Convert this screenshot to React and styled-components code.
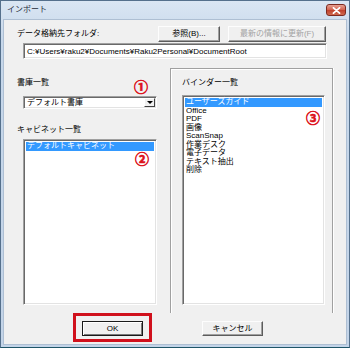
import React from 'react';
import styled, { createGlobalStyle } from 'styled-components';

const UI = `"Liberation Sans", "Noto Sans CJK JP", sans-serif`;

const Global = createGlobalStyle`
  html, body { margin: 0; padding: 0; background: #fff; }
  body { width: 350px; height: 348px; overflow: hidden; }
  *, *::before, *::after { box-sizing: border-box; }
`;

const Window = styled.div`
  width: 350px;
  height: 348px;
  display: flex;
  flex-direction: column;
  background: linear-gradient(#dae6f3, #c6d7ea 40px, #c3d4e8);
  border: 1px solid #55708c;
  border-bottom-color: #1f5568;
  font-family: ${UI};
  font-size: 8px;
  color: #000;
`;

const TitleBar = styled.div`
  height: 19px;
  flex: none;
  display: flex;
  align-items: flex-start;
  padding-left: 6px;
`;

const Title = styled.span`
  margin-top: 4px;
  font-size: 8px;
  line-height: 10px;
  color: #1e2a38;
`;

const Close = styled.div`
  margin-left: auto;
  margin-right: 3px;
  margin-top: 3px;
  width: 20px;
  height: 12px;
  border: 1px solid #7d2a20;
  border-radius: 3px;
  background: linear-gradient(#e6a193, #d2604c 50%, #c0402c 51%, #cf6a4f);
  display: flex;
  align-items: center;
  justify-content: center;
`;

const Client = styled.div`
  flex: 1;
  margin: 0 3px 3px;
  background: #f0f0f0;
  box-shadow: 0 0 0 1px #aebfd3;
  display: flex;
  flex-direction: column;
`;

const TopRow = styled.div`
  display: flex;
  align-items: center;
  gap: 8px;
  padding: 6px 20px 0 13px;
`;

const Label = styled.span`
  flex: ${(p) => (p.$grow ? 1 : 'none')};
  margin-top: ${(p) => p.$mt || 0}px;
  font-size: 8px;
  line-height: 10px;
  white-space: nowrap;
`;

const Button = styled.button`
  width: ${(p) => p.$w}px;
  height: ${(p) => p.$h || 16}px;
  padding: 0;
  margin: 0;
  font-family: ${UI};
  font-size: 8px;
  line-height: 10px;
  color: ${(p) => (p.disabled ? '#a3a3a3' : '#000')};
  background: #f0f0f0;
  border: 1px solid;
  border-color: ${(p) => (p.$default ? '#1a1a1a' : '#fdfdfd #5c5c5c #5c5c5c #fdfdfd')};
  box-shadow: ${(p) =>
    p.$default
      ? 'inset 1px 1px 0 #fff, inset -1px -1px 0 #7a7a7a'
      : 'inset -1px -1px 0 #a0a0a0'};
  white-space: nowrap;
`;

const PathField = styled.div`
  margin: 1px 19px 0;
  height: 16px;
  background: #fff;
  border: 1px solid;
  border-color: #a0a0a0 #fff #fff #a0a0a0;
  box-shadow: inset 1px 1px 0 #696969, inset -1px -1px 0 #e3e3e3;
  padding: 0 3px;
  display: flex;
  align-items: center;
  font-size: 8px;
  white-space: nowrap;
  overflow: hidden;
`;

const Main = styled.div`
  margin-top: 9px;
  display: flex;
  height: 245px;
`;

const LeftCol = styled.div`
  width: 166px;
  padding: 10px 0 0 13px;
  display: flex;
  flex-direction: column;
  position: relative;
`;

const RightPanel = styled.div`
  width: 163px;
  height: 245px;
  border: 1px solid #a0a0a0;
  border-bottom: none;
  box-shadow: inset 1px 1px 0 #fff, 1px 0 0 #fff;
  padding: 9px 0 0 11px;
  display: flex;
  flex-direction: column;
`;

const Combo = styled.div`
  margin: 8px 0 0 6px;
  width: 134px;
  height: 13px;
  background: #fff;
  border: 1px solid;
  border-color: #a0a0a0 #fff #fff #a0a0a0;
  box-shadow: inset 1px 1px 0 #696969, inset -1px -1px 0 #e3e3e3;
  display: flex;
  align-items: center;
  padding: 1px 1px 1px 3px;
`;

const ComboText = styled.span`
  flex: 1;
  line-height: 10px;
`;

const ComboArrow = styled.span`
  width: 11px;
  height: 9px;
  background: #f0f0f0;
  border: 1px solid;
  border-color: #fff #404040 #404040 #fff;
  display: flex;
  align-items: center;
  justify-content: center;
  &::after {
    content: '';
    border-left: 3px solid transparent;
    border-right: 3px solid transparent;
    border-top: 3px solid #000;
  }
`;

const List = styled.div`
  position: relative;
  margin: ${(p) => p.$mt}px 0 0 ${(p) => p.$ml}px;
  width: ${(p) => p.$w}px;
  height: ${(p) => p.$h}px;
  background: #fff;
  border: 1px solid;
  border-color: #a0a0a0 #fff #fff #a0a0a0;
  box-shadow: inset 1px 1px 0 #696969, inset -1px -1px 0 #e3e3e3;
  padding: 2px 2px;
`;

const Item = styled.div`
  height: 8.5px;
  line-height: 8.5px;
  padding-left: 1px;
  white-space: nowrap;
  background: ${(p) => (p.$sel ? '#3399ff' : 'transparent')};
  color: ${(p) => (p.$sel ? '#fff' : '#000')};
`;

const Marker = styled.span`
  position: absolute;
  left: ${(p) => p.$x}px;
  top: ${(p) => p.$y}px;
  font-family: "Noto Sans CJK JP", sans-serif;
  font-size: 14px;
  font-weight: 700;
  line-height: 14px;
  color: #dc121c;
  -webkit-text-stroke: 0.6px #dc121c;
`;

const Bottom = styled.div`
  display: flex;
  align-items: flex-start;
  padding-left: 69px;
  gap: 50px;
`;

const Highlight = styled.div`
  border: 3px solid #d0101c;
  padding: 5px 6px 3px;
`;

const CancelWrap = styled.div`
  padding-top: 8px;
`;

const binders = [
  'ユーザーズガイド',
  'Office',
  'PDF',
  '画像',
  'ScanSnap',
  '作業デスク',
  '電子データ',
  'テキスト抽出',
  '削除',
];

export default function App() {
  return (
    <>
      <Global />
      <Window>
        <TitleBar>
          <Title>インポート</Title>
          <Close>
            <svg width="9" height="7" viewBox="0 0 9 7">
              <path d="M1.5 0.8 L7.5 6.2 M7.5 0.8 L1.5 6.2" stroke="#fff" strokeWidth="1.8" strokeLinecap="round" />
            </svg>
          </Close>
        </TitleBar>
        <Client>
          <TopRow>
            <Label $grow>データ格納先フォルダ:</Label>
            <Button $w={62}>参照(B)...</Button>
            <Button $w={98} disabled>最新の情報に更新(F)</Button>
          </TopRow>
          <PathField>C:¥Users¥raku2¥Documents¥Raku2Personal¥DocumentRoot</PathField>
          <Main>
            <LeftCol>
              <Label>書庫一覧</Label>
              <Marker $x={130} $y={11}>①</Marker>
              <Combo>
                <ComboText>デフォルト書庫</ComboText>
                <ComboArrow />
              </Combo>
              <Label $mt={16}>キャビネット一覧</Label>
              <List $mt={4} $ml={6} $w={134} $h={166}>
                <Item $sel>デフォルトキャビネット</Item>
                <Marker $x={111} $y={11}>②</Marker>
              </List>
            </LeftCol>
            <RightPanel>
              <Label>バインダー一覧</Label>
              <List $mt={7} $ml={0} $w={143} $h={210}>
                {binders.map((b, i) => (
                  <Item key={b} $sel={i === 0}>{b}</Item>
                ))}
                <Marker $x={123} $y={14}>③</Marker>
              </List>
            </RightPanel>
          </Main>
          <Bottom>
            <Highlight>
              <Button $w={61} $h={15} $default>OK</Button>
            </Highlight>
            <CancelWrap>
              <Button $w={61} $h={15}>キャンセル</Button>
            </CancelWrap>
          </Bottom>
        </Client>
      </Window>
    </>
  );
}
